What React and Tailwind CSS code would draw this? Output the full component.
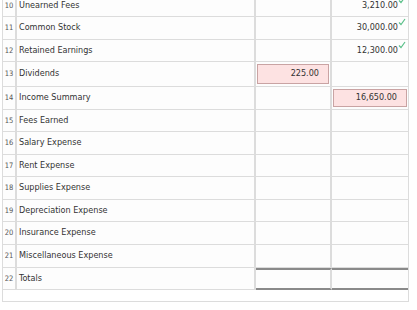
const rows = [
  { n: 10, label: "Unearned Fees", credit: "3,210.00", check: true, h: "h-[22px]" },
  { n: 11, label: "Common Stock", credit: "30,000.00", check: true, h: "h-[23px]" },
  { n: 12, label: "Retained Earnings", credit: "12,300.00", check: true, h: "h-[22px]" },
  { n: 13, label: "Dividends", debitInput: "225.00", h: "h-[25px]" },
  { n: 14, label: "Income Summary", creditInput: "16,650.00", h: "h-[23px]" },
  { n: 15, label: "Fees Earned", h: "h-[22px]" },
  { n: 16, label: "Salary Expense", h: "h-[23px]" },
  { n: 17, label: "Rent Expense", h: "h-[22px]" },
  { n: 18, label: "Supplies Expense", h: "h-[23px]" },
  { n: 19, label: "Depreciation Expense", h: "h-[22px]" },
  { n: 20, label: "Insurance Expense", h: "h-[23px]" },
  { n: 21, label: "Miscellaneous Expense", h: "h-[23px]" },
  { n: 22, label: "Totals", h: "h-[22px]", totals: true },
];

function Check() {
  return (
    <svg className="absolute right-[2px] top-[1px] w-[8px] h-[8px]" viewBox="0 0 8 8">
      <path d="M1 4.5 L3 6.5 L7 1" fill="none" stroke="#5cc08a" strokeWidth="1.2" />
    </svg>
  );
}

function PinkBox({ value }) {
  return (
    <div className="mx-[1px] my-[2px] flex-1 self-stretch flex items-center justify-end pr-[9px] bg-[#fde2e2] border border-[#c9a3a3] text-[#333]">
      {value}
    </div>
  );
}

export default function App() {
  return (
    <div
      className="w-[417px] h-[310px] overflow-hidden bg-white text-[9px] text-[#333]"
      style={{ fontFamily: '"DejaVu Sans Condensed","Liberation Sans Narrow",sans-serif' }}
    >
      <div className="ml-[2px] w-[407px] -mt-[5px] border border-t-0 border-[#dcdcdc] pb-[11px]">
        {rows.map((r) => (
          <div key={r.n} className={`flex ${r.h} border-b border-[#dcdcdc] bg-[#fdfdfd]`}>
            <div className="w-[14px] border-r-2 border-[#dcdcdc] flex items-center justify-center text-[7.5px] text-[#555]">
              {r.n}
            </div>
            <div className="w-[239px] border-r-2 border-[#dcdcdc] flex items-center pl-[2px]">
              {r.label}
            </div>
            <div
              className={`w-[76px] border-r-2 border-[#dcdcdc] flex ${
                r.totals ? "border-t-2 border-t-[#8a8a8a] border-b-2 border-b-[#8a8a8a] -mb-[1px]" : ""
              }`}
            >
              {r.debitInput && <PinkBox value={r.debitInput} />}
            </div>
            <div
              className={`relative flex-1 flex items-center justify-end ${
                r.totals ? "border-t-2 border-t-[#8a8a8a] border-b-2 border-b-[#8a8a8a] -mb-[1px]" : ""
              } ${r.credit ? "pr-[10px]" : ""}`}
            >
              {r.creditInput ? (
                <PinkBox value={r.creditInput} />
              ) : (
                r.credit && (
                  <>
                    <span>{r.credit}</span>
                    {r.check && <Check />}
                  </>
                )
              )}
            </div>
          </div>
        ))}
      </div>
    </div>
  );
}
